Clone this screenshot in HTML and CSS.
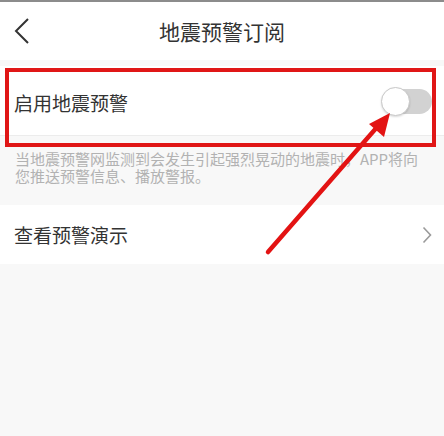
FILE: index.html
```html
<!DOCTYPE html>
<html lang="zh">
<head>
<meta charset="utf-8">
<link rel="stylesheet" href="styles.css">
</head>
<body>
<div class="page">
  <header class="header">
    <svg class="back" width="16" height="26" viewBox="0 0 16 26"><path d="M14 1 L2 13 L14 25" fill="none" stroke="#333" stroke-width="2"/></svg>
    <div class="title">地震预警订阅</div>
  </header>
  <div class="gap"></div>
  <div class="row row-switch">
    <span class="label">启用地震预警</span>
    <span class="toggle"><span class="knob"></span></span>
  </div>
  <div class="desc">当地震预警网监测到会发生引起强烈晃动的地震时，APP将向您推送预警信息、播放警报。</div>
  <div class="row row-link">
    <span class="label">查看预警演示</span>
    <svg class="chev" width="10" height="18" viewBox="0 0 10 18"><path d="M1.5 1.5 L8.5 9 L1.5 16.5" fill="none" stroke="#9a9a9a" stroke-width="1.6"/></svg>
  </div>
  <div class="redbox"></div>
  <svg class="arrow" width="444" height="436" viewBox="0 0 444 436">
    <line x1="268" y1="252" x2="378" y2="126" stroke="#e31313" stroke-width="4.5" stroke-linecap="round"/>
    <polygon points="390,113 369,124 384,137" fill="#e31313"/>
  </svg>
</div>
</body>
</html>
```
FILE: styles.css
```css
html, body {
  margin: 0;
  padding: 0;
  background: #f8f8f8;
  font-family: "Noto Sans CJK SC", "Noto Sans", sans-serif;
}
.page {
  position: relative;
  width: 444px;
  height: 436px;
  overflow: hidden;
}
.header {
  height: 58px;
  border-top: 2px solid #8c8c8c;
  background: #fff;
  display: flex;
  align-items: center;
  justify-content: center;
  position: relative;
}
.back {
  position: absolute;
  left: 14px;
  top: 16px;
}
.title {
  font-size: 21px;
  color: #333;
  line-height: 1;
}
.gap {
  height: 6px;
}
.row {
  background: #fff;
  display: flex;
  align-items: center;
  justify-content: space-between;
  padding: 0 12px 0 14px;
  box-sizing: border-box;
}
.row-switch {
  height: 70px;
  padding-top: 4px;
  border-bottom: 1px solid #ececec;
}
.row-link {
  height: 59px;
}
.label {
  font-size: 19px;
  color: #333;
  line-height: 1;
}
.toggle {
  width: 49px;
  height: 25px;
  border-radius: 13px;
  background: #d2d2d2;
  position: relative;
  margin-top: -3px;
}
.knob {
  position: absolute;
  left: -2px;
  top: -2px;
  width: 27px;
  height: 27px;
  border-radius: 50%;
  background: #fff;
  border: 1px solid #c8c8c8;
  box-shadow: 0 1px 2px rgba(0,0,0,0.15);
}
.chev {
  margin-right: 0;
}
.desc {
  height: 69px;
  box-sizing: border-box;
  padding: 14px 12px 0 15px;
  font-size: 15px;
  line-height: 17px;
  color: #b2b2b2;
}
.redbox {
  position: absolute;
  left: 5px;
  top: 68px;
  width: 431px;
  height: 79px;
  box-sizing: border-box;
  border: 4px solid #e01616;
}
.arrow {
  position: absolute;
  left: 0;
  top: 0;
}
```
